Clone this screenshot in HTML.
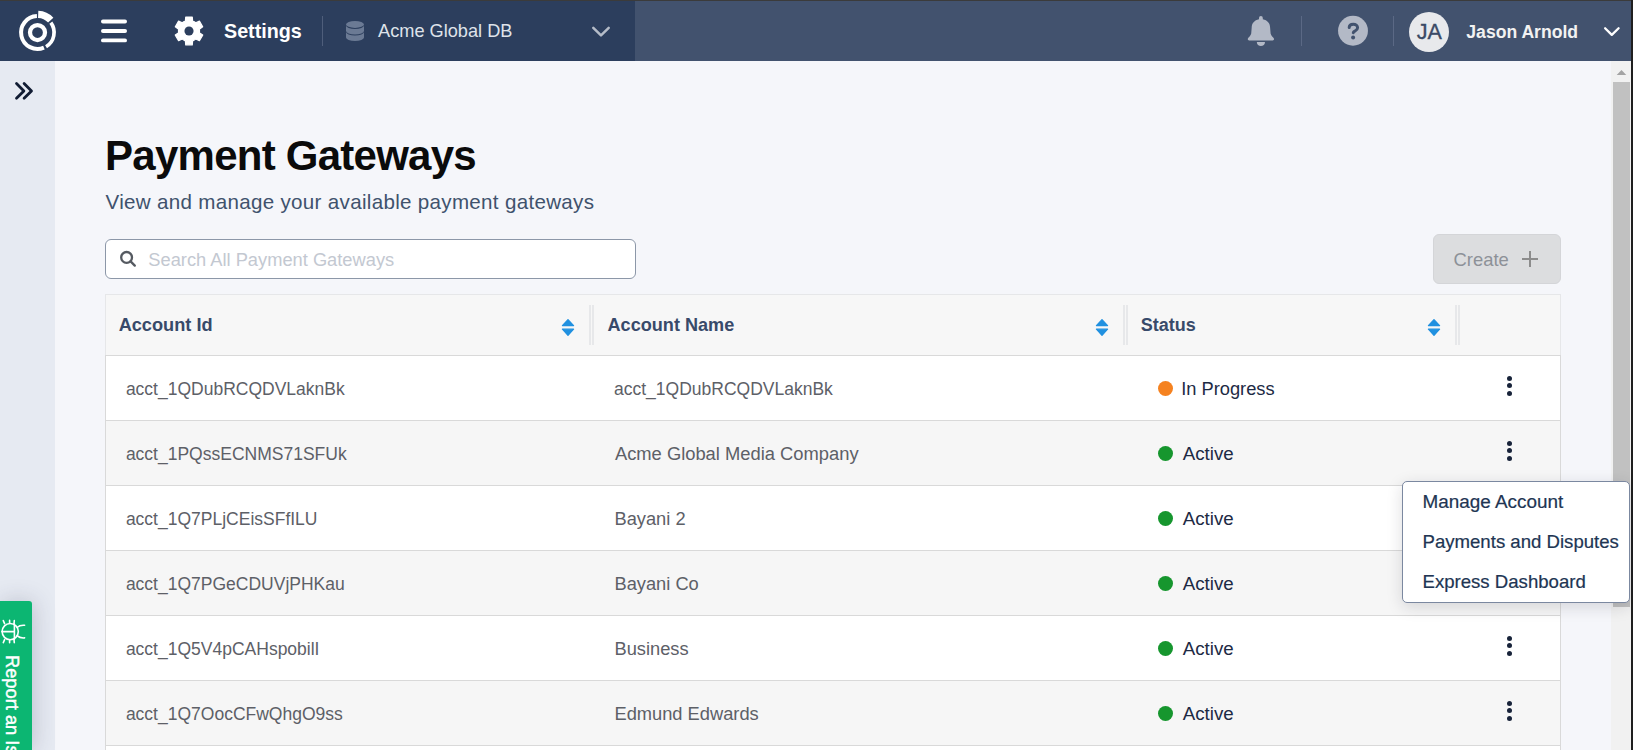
<!DOCTYPE html>
<html><head><meta charset="utf-8">
<style>
*{box-sizing:border-box;margin:0;padding:0}
html,body{width:1633px;height:750px;overflow:hidden;background:#f5f6fa;font-family:"Liberation Sans",sans-serif}
.t{position:absolute;white-space:nowrap;line-height:1}
.r{position:absolute}
svg{position:absolute;overflow:visible}
</style></head>
<body>
<div class="r" style="left:0px;top:0px;width:1633px;height:1px;background:#3b3b3b;"></div>
<div class="r" style="left:0px;top:1px;width:635px;height:60px;background:#2c3e5d;"></div>
<div class="r" style="left:635px;top:1px;width:996px;height:60px;background:#42526e;"></div>
<div class="r" style="left:0px;top:61px;width:55px;height:689px;background:#e6eaf2;"></div>
<svg style="left:0;top:0" width="80" height="62" viewBox="0 0 80 62">
 <g fill="none" stroke="#fff">
  <circle cx="37.5" cy="32.5" r="7.5" stroke-width="4.25"/>
  <path d="M 43.93 47.64 A 16.45 16.45 0 1 1 36.93 16.06" stroke-width="4"/>
  <path d="M 50.84 22.63 A 16.6 16.6 0 0 1 46.05 46.73" stroke-width="3.7"/>
  <path d="M 38.19 14.41 A 18.1 18.1 0 0 1 50.74 20.16" stroke-width="7.2"/>
 </g>
</svg>
<svg style="left:0;top:0" width="140" height="62" viewBox="0 0 140 62"><g fill="#fff"><rect x="101" y="19.55" width="26" height="3.9" rx="1.95"/><rect x="101" y="29.05" width="26" height="3.9" rx="1.95"/><rect x="101" y="38.449999999999996" width="26" height="3.9" rx="1.95"/></g></svg>
<svg style="left:0;top:0" width="240" height="62" viewBox="0 0 240 62">
 <path d="M 185.38 21.10 L 185.73 17.03 L 192.27 17.03 L 192.62 21.10 L 193.04 21.26 L 193.45 21.44 L 193.86 21.64 L 194.25 21.86 L 194.63 22.09 L 195.01 22.34 L 195.37 22.60 L 195.72 22.88 L 199.42 21.16 L 202.69 26.82 L 199.35 29.16 L 199.41 29.61 L 199.46 30.05 L 199.49 30.50 L 199.50 30.95 L 199.49 31.40 L 199.46 31.85 L 199.41 32.29 L 199.35 32.74 L 202.69 35.08 L 199.42 40.74 L 195.72 39.02 L 195.37 39.30 L 195.01 39.56 L 194.63 39.81 L 194.25 40.04 L 193.86 40.26 L 193.45 40.46 L 193.04 40.64 L 192.62 40.80 L 192.27 44.87 L 185.73 44.87 L 185.38 40.80 L 184.96 40.64 L 184.55 40.46 L 184.14 40.26 L 183.75 40.04 L 183.37 39.81 L 182.99 39.56 L 182.63 39.30 L 182.28 39.02 L 178.58 40.74 L 175.31 35.08 L 178.65 32.74 L 178.59 32.29 L 178.54 31.85 L 178.51 31.40 L 178.50 30.95 L 178.51 30.50 L 178.54 30.05 L 178.59 29.61 L 178.65 29.16 L 175.31 26.82 L 178.58 21.16 L 182.28 22.88 L 182.63 22.60 L 182.99 22.34 L 183.37 22.09 L 183.75 21.86 L 184.14 21.64 L 184.55 21.44 L 184.96 21.26 Z" fill="#fff" stroke="#fff" stroke-width="1.2" stroke-linejoin="round"/>
 <circle cx="189" cy="31.05" r="4.55" fill="#2c3e5d"/>
</svg>
<div class="t" style="left:224.40px;top:21.00px;font-size:20px;color:#ffffff;font-weight:bold;transform-origin:0 17px;transform:scale(0.985,1.035);">Settings</div>
<div class="r" style="left:322px;top:16px;width:1px;height:30px;background:#4f5e7b;"></div>
<svg style="left:0;top:0" width="380" height="62" viewBox="0 0 380 62">
 <g fill="#6b7a94">
  <ellipse cx="355" cy="24.4" rx="9" ry="3.5"/>
  <path d="M346 25.6 A 9 3.5 0 0 0 364 25.6 V 31 A 9 3.5 0 0 1 346 31 Z"/>
  <path d="M346 32.1 A 9 3.5 0 0 0 364 32.1 V 37.5 A 9 3.5 0 0 1 346 37.5 Z"/>
 </g>
</svg>
<div class="t" style="left:378.00px;top:22.00px;font-size:18.2px;color:#dfe3ea;">Acme Global DB</div>
<svg style="left:0;top:0" width="640" height="62" viewBox="0 0 640 62">
 <path d="M593.3 27.9 L601 35.4 L608.7 27.9" fill="none" stroke="#b5bcc8" stroke-width="2.5" stroke-linecap="round" stroke-linejoin="round"/>
</svg>
<svg style="left:0;top:0" width="1633" height="62" viewBox="0 0 1633 62">
 <g fill="#b3b9c6">
  <path d="M 1260.9 16.05 a 1.9 1.9 0 0 1 1.9 1.9 v 1.4 C 1267.4 20.3, 1270.1000000000001 23.5, 1270.1000000000001 27.5 L 1270.6000000000001 33.5 C 1270.9 35.5, 1273.4 37.5, 1273.9 38.5 Q 1274.5 40.4, 1272.7 40.4 H 1249.1000000000001 Q 1247.3000000000002 40.4, 1247.9 38.5 C 1248.4 37.5, 1250.9 35.5, 1251.2 33.5 L 1251.7 27.5 C 1251.7 23.5, 1254.4 20.3, 1259.0 19.35 v -1.4 a 1.9 1.9 0 0 1 1.9 -1.9 Z"/>
  <path d="M 1256.8000000000002 41.9 H 1265.0 C 1265.0 44.5, 1263.2 46, 1260.9 46 C 1258.6000000000001 46, 1256.8000000000002 44.5, 1256.8000000000002 41.9 Z"/>
  <circle cx="1353" cy="30.8" r="14.95"/>
 </g>
 <path d="M 1349.2 27.6 C 1349.2 25.5, 1351 24.3, 1353.3 24.3 C 1355.7 24.3, 1357.6 25.7, 1357.6 27.8 C 1357.6 30.1, 1355.1 30.7, 1353.7 31.9 L 1353.3 32.7" fill="none" stroke="#42526e" stroke-width="3" stroke-linecap="round" stroke-linejoin="round"/>
 <circle cx="1353.1" cy="37.6" r="2" fill="#42526e"/>
</svg>
<div class="r" style="left:1301px;top:16px;width:1px;height:30px;background:#5b6985;"></div>
<div class="r" style="left:1393px;top:16px;width:1px;height:30px;background:#5b6985;"></div>
<div class="r" style="left:1409px;top:12px;width:40px;height:40px;background:#e8e9ec;border-radius:50%;"></div>
<div class="t" style="left:1416.80px;top:22.00px;font-size:21.5px;color:#3b4a66;-webkit-text-stroke:0.35px #3b4a66;">JA</div>
<div class="t" style="left:1466.32px;top:24.00px;font-size:17.6px;color:#f2f2f2;font-weight:bold;">Jason Arnold</div>
<svg style="left:0;top:0" width="1633" height="62" viewBox="0 0 1633 62">
 <path d="M1605.1 28.2 L1611.8 34.9 L1618.6 28.2" fill="none" stroke="#ffffff" stroke-width="2.3" stroke-linecap="round" stroke-linejoin="round"/>
</svg>
<svg style="left:0;top:0" width="55" height="120" viewBox="0 0 55 120">
 <g fill="none" stroke="#111c33" stroke-width="2.8" stroke-linecap="round" stroke-linejoin="round">
  <path d="M16.5 83.5 L23.9 90.9 L16.5 98.3"/>
  <path d="M24.1 83.5 L31.5 90.9 L24.1 98.3"/>
 </g>
</svg>
<div class="t" style="left:105.08px;top:135.00px;font-size:42px;color:#0b0b0b;font-weight:bold;letter-spacing:-0.75px;">Payment Gateways</div>
<div class="t" style="left:105.50px;top:192.00px;font-size:20.6px;color:#40526d;letter-spacing:0.3px;">View and manage your available payment gateways</div>
<div class="r" style="left:105px;top:239px;width:531px;height:40px;background:#ffffff;border:1px solid #8c97a8;border-radius:6px;"></div>
<svg style="left:0;top:0" width="200" height="300" viewBox="0 0 200 300">
 <g fill="none" stroke="#555a61" stroke-width="2.3" stroke-linecap="round">
  <circle cx="126.6" cy="257.4" r="5.4"/>
  <path d="M130.6 261.4 L134.8 265.6"/>
 </g>
</svg>
<div class="t" style="left:148.27px;top:251.00px;font-size:18.3px;color:#c3c8d1;">Search All Payment Gateways</div>
<div class="r" style="left:1433px;top:234px;width:128px;height:50px;background:#dcdddf;border:1px solid #d4d5d8;border-radius:6px;"></div>
<div class="t" style="left:1453.58px;top:251.00px;font-size:18.4px;color:#8d9198;">Create</div>
<div class="r" style="left:1522px;top:258px;width:16px;height:2px;background:#8c8c8c;"></div>
<div class="r" style="left:1529px;top:251px;width:2px;height:16px;background:#8c8c8c;"></div>
<div class="r" style="left:105px;top:294px;width:1456px;height:61px;background:#f7f7f7;border:1px solid #e6e7e9;border-bottom:none;"></div>
<div class="r" style="left:105px;top:355px;width:1456px;height:1px;background:#d9d9d9;"></div>
<div class="r" style="left:105px;top:356px;width:1456px;height:64px;background:#ffffff;border-left:1px solid #d9d9d9;border-right:1px solid #d9d9d9;"></div>
<div class="r" style="left:105px;top:420px;width:1456px;height:1px;background:#d9d9d9;"></div>
<div class="r" style="left:105px;top:421px;width:1456px;height:64px;background:#f6f6f6;border-left:1px solid #d9d9d9;border-right:1px solid #d9d9d9;"></div>
<div class="r" style="left:105px;top:485px;width:1456px;height:1px;background:#d9d9d9;"></div>
<div class="r" style="left:105px;top:486px;width:1456px;height:64px;background:#ffffff;border-left:1px solid #d9d9d9;border-right:1px solid #d9d9d9;"></div>
<div class="r" style="left:105px;top:550px;width:1456px;height:1px;background:#d9d9d9;"></div>
<div class="r" style="left:105px;top:551px;width:1456px;height:64px;background:#f6f6f6;border-left:1px solid #d9d9d9;border-right:1px solid #d9d9d9;"></div>
<div class="r" style="left:105px;top:615px;width:1456px;height:1px;background:#d9d9d9;"></div>
<div class="r" style="left:105px;top:616px;width:1456px;height:64px;background:#ffffff;border-left:1px solid #d9d9d9;border-right:1px solid #d9d9d9;"></div>
<div class="r" style="left:105px;top:680px;width:1456px;height:1px;background:#d9d9d9;"></div>
<div class="r" style="left:105px;top:681px;width:1456px;height:64px;background:#f6f6f6;border-left:1px solid #d9d9d9;border-right:1px solid #d9d9d9;"></div>
<div class="r" style="left:105px;top:745px;width:1456px;height:1px;background:#d9d9d9;"></div>
<div class="r" style="left:105px;top:746px;width:1456px;height:64px;background:#ffffff;border-left:1px solid #d9d9d9;border-right:1px solid #d9d9d9;"></div>
<div class="r" style="left:105px;top:810px;width:1456px;height:1px;background:#d9d9d9;"></div>
<div class="t" style="left:125.90px;top:381.00px;font-size:17.5px;color:#5d6067;">acct_1QDubRCQDVLaknBk</div>
<div class="t" style="left:614.00px;top:381.00px;font-size:17.5px;color:#5d6067;">acct_1QDubRCQDVLaknBk</div>
<div class="r" style="left:1158px;top:380.9px;width:15px;height:15px;background:#f58220;border-radius:50%;"></div>
<div class="t" style="left:1181.15px;top:380.00px;font-size:18.3px;color:#1d2a44;">In Progress</div>
<div class="r" style="left:1506.9px;top:375.9px;width:5px;height:5px;background:#18233a;border-radius:50%;"></div>
<div class="r" style="left:1506.9px;top:383.4px;width:5px;height:5px;background:#18233a;border-radius:50%;"></div>
<div class="r" style="left:1506.9px;top:390.9px;width:5px;height:5px;background:#18233a;border-radius:50%;"></div>
<div class="t" style="left:125.90px;top:446.00px;font-size:17.5px;color:#5d6067;">acct_1PQssECNMS71SFUk</div>
<div class="t" style="left:614.90px;top:445.00px;font-size:18.35px;color:#5d6067;">Acme Global Media Company</div>
<div class="r" style="left:1158px;top:445.9px;width:15px;height:15px;background:#16962e;border-radius:50%;"></div>
<div class="t" style="left:1182.80px;top:445.00px;font-size:18.7px;color:#1d2a44;">Active</div>
<div class="r" style="left:1506.9px;top:440.9px;width:5px;height:5px;background:#18233a;border-radius:50%;"></div>
<div class="r" style="left:1506.9px;top:448.4px;width:5px;height:5px;background:#18233a;border-radius:50%;"></div>
<div class="r" style="left:1506.9px;top:455.9px;width:5px;height:5px;background:#18233a;border-radius:50%;"></div>
<div class="t" style="left:125.90px;top:511.00px;font-size:17.5px;color:#5d6067;">acct_1Q7PLjCEisSFfILU</div>
<div class="t" style="left:614.44px;top:510.00px;font-size:18.3px;color:#5d6067;">Bayani 2</div>
<div class="r" style="left:1158px;top:510.9px;width:15px;height:15px;background:#16962e;border-radius:50%;"></div>
<div class="t" style="left:1182.80px;top:510.00px;font-size:18.7px;color:#1d2a44;">Active</div>
<div class="t" style="left:125.90px;top:576.00px;font-size:17.5px;color:#5d6067;">acct_1Q7PGeCDUVjPHKau</div>
<div class="t" style="left:614.44px;top:575.00px;font-size:18.3px;color:#5d6067;">Bayani Co</div>
<div class="r" style="left:1158px;top:575.9px;width:15px;height:15px;background:#16962e;border-radius:50%;"></div>
<div class="t" style="left:1182.80px;top:575.00px;font-size:18.7px;color:#1d2a44;">Active</div>
<div class="t" style="left:125.90px;top:641.00px;font-size:17.5px;color:#5d6067;">acct_1Q5V4pCAHspobilI</div>
<div class="t" style="left:614.44px;top:640.00px;font-size:18.3px;color:#5d6067;">Business</div>
<div class="r" style="left:1158px;top:640.9px;width:15px;height:15px;background:#16962e;border-radius:50%;"></div>
<div class="t" style="left:1182.80px;top:640.00px;font-size:18.7px;color:#1d2a44;">Active</div>
<div class="r" style="left:1506.9px;top:635.9px;width:5px;height:5px;background:#18233a;border-radius:50%;"></div>
<div class="r" style="left:1506.9px;top:643.4px;width:5px;height:5px;background:#18233a;border-radius:50%;"></div>
<div class="r" style="left:1506.9px;top:650.9px;width:5px;height:5px;background:#18233a;border-radius:50%;"></div>
<div class="t" style="left:125.90px;top:706.00px;font-size:17.5px;color:#5d6067;">acct_1Q7OocCFwQhgO9ss</div>
<div class="t" style="left:614.44px;top:705.00px;font-size:18.3px;color:#5d6067;">Edmund Edwards</div>
<div class="r" style="left:1158px;top:705.9px;width:15px;height:15px;background:#16962e;border-radius:50%;"></div>
<div class="t" style="left:1182.80px;top:705.00px;font-size:18.7px;color:#1d2a44;">Active</div>
<div class="r" style="left:1506.9px;top:700.9px;width:5px;height:5px;background:#18233a;border-radius:50%;"></div>
<div class="r" style="left:1506.9px;top:708.4px;width:5px;height:5px;background:#18233a;border-radius:50%;"></div>
<div class="r" style="left:1506.9px;top:715.9px;width:5px;height:5px;background:#18233a;border-radius:50%;"></div>
<div class="t" style="left:118.64px;top:316.00px;font-size:18.2px;color:#384a6a;font-weight:bold;">Account Id</div>
<div class="t" style="left:607.54px;top:316.00px;font-size:18.1px;color:#384a6a;font-weight:bold;">Account Name</div>
<div class="t" style="left:1140.64px;top:316.00px;font-size:18.0px;color:#384a6a;font-weight:bold;">Status</div>
<svg style="left:560px;top:314px" width="16" height="26" viewBox="0 0 16 26">
 <g fill="#2191e0" stroke="#2191e0" stroke-width="1.2" stroke-linejoin="round">
  <path d="M8 5.6 L13.6 11.6 H2.4 Z"/>
  <path d="M8 21.4 L13.6 15.2 H2.4 Z"/>
 </g>
</svg>
<svg style="left:1094px;top:314px" width="16" height="26" viewBox="0 0 16 26">
 <g fill="#2191e0" stroke="#2191e0" stroke-width="1.2" stroke-linejoin="round">
  <path d="M8 5.6 L13.6 11.6 H2.4 Z"/>
  <path d="M8 21.4 L13.6 15.2 H2.4 Z"/>
 </g>
</svg>
<svg style="left:1426px;top:314px" width="16" height="26" viewBox="0 0 16 26">
 <g fill="#2191e0" stroke="#2191e0" stroke-width="1.2" stroke-linejoin="round">
  <path d="M8 5.6 L13.6 11.6 H2.4 Z"/>
  <path d="M8 21.4 L13.6 15.2 H2.4 Z"/>
 </g>
</svg>
<div class="r" style="left:589px;top:305px;width:2px;height:40px;background:#e7e8ea;"></div>
<div class="r" style="left:592px;top:305px;width:2px;height:40px;background:#e7e8ea;"></div>
<div class="r" style="left:1123px;top:305px;width:2px;height:40px;background:#e7e8ea;"></div>
<div class="r" style="left:1126px;top:305px;width:2px;height:40px;background:#e7e8ea;"></div>
<div class="r" style="left:1455px;top:305px;width:2px;height:40px;background:#e7e8ea;"></div>
<div class="r" style="left:1458px;top:305px;width:2px;height:40px;background:#e7e8ea;"></div>
<div class="r" style="left:1611px;top:61px;width:20px;height:689px;background:#f1f1f1;"></div>
<svg style="left:0;top:0" width="1633" height="90" viewBox="0 0 1633 90">
 <path d="M1621.5 70 L1626.3 75 H1616.7 Z" fill="#a3a3a3"/>
</svg>
<div class="r" style="left:1613px;top:82px;width:17px;height:525px;background:#c1c1c1;"></div>
<div class="r" style="left:1631px;top:0px;width:2px;height:750px;background:#1f1f1f;"></div>
<div class="r" style="left:1402px;top:481px;width:228px;height:122px;background:#ffffff;border:1px solid #7b88a0;border-radius:5px;box-shadow:0 4px 16px rgba(30,30,40,0.15);"></div>
<div class="t" style="left:1422.49px;top:493.00px;font-size:18.9px;color:#213553;-webkit-text-stroke:0.2px #213553;">Manage Account</div>
<div class="t" style="left:1422.51px;top:533.00px;font-size:18.6px;color:#213553;-webkit-text-stroke:0.2px #213553;">Payments and Disputes</div>
<div class="t" style="left:1422.51px;top:573.00px;font-size:18.6px;color:#213553;-webkit-text-stroke:0.2px #213553;">Express Dashboard</div>
<div class="r" style="left:0px;top:601.3px;width:31.6px;height:149px;background:#0cb672;border-top-right-radius:3px;box-shadow:2px 0 22px rgba(50,50,80,0.22);"></div>
<div class="t" style="left:21.4px;top:654.8px;font-size:18.3px;color:#fff;-webkit-text-stroke:0.45px #fff;transform-origin:0 0;transform:rotate(90deg);">Report an Issue</div>
<svg style="left:0;top:0" width="40" height="750" viewBox="0 0 40 750">
 <g fill="none" stroke="#fff" stroke-width="1.6" stroke-linecap="round">
  <circle cx="10.2" cy="631.6" r="8.1"/>
  <path d="M14.4 624 V639.2 M1.9 631.6 H14.4"/>
  <path d="M17.4 627.3 Q19.8 624.9 24.6 625.3 M17.4 635.9 Q19.8 638.3 24.6 637.9"/>
  <path d="M3.3 620.6 L4.6 623.6 M9.6 620.4 V623.2 M14.3 620.6 L14 623.6 M3.3 642.6 L4.6 639.6 M9.6 642.8 V640 M14.3 642.6 L14 639.6"/>
 </g>
</svg>
</body></html>
